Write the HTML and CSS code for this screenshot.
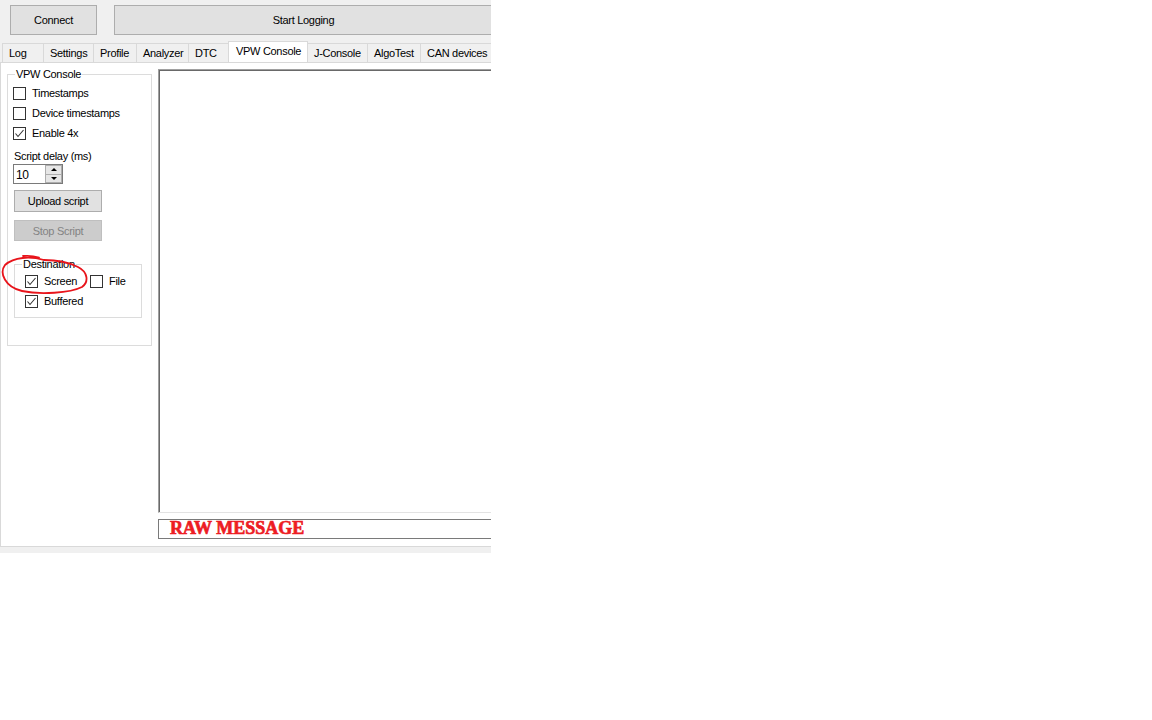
FILE: index.html
```html
<!DOCTYPE html>
<html lang="en">
<head>
  <meta charset="UTF-8" />
  <title>VPW Console</title>
  <link rel="stylesheet" href="styles.css">
</head>
<body>
  <div class="window">
    <div class="toolbar">
      <button class="btn btn-connect">Connect</button>
      <button class="btn btn-logging">Start Logging</button>
    </div>

    <div class="tabs">
      <div class="tab w-log">Log</div>
      <div class="tab w-settings">Settings</div>
      <div class="tab w-profile">Profile</div>
      <div class="tab w-analyzer">Analyzer</div>
      <div class="tab w-dtc">DTC</div>
      <div class="tab tab-active w-vpw">VPW Console</div>
      <div class="tab w-jconsole">J-Console</div>
      <div class="tab w-algo">AlgoTest</div>
      <div class="tab w-can">CAN devices</div>
    </div>

    <div class="page">
      <fieldset class="group group-vpw">
        <legend>VPW Console</legend>
        <label class="check-row">
          <span class="checkbox"></span>Timestamps
        </label>
        <label class="check-row">
          <span class="checkbox"></span>Device timestamps
        </label>
        <label class="check-row">
          <span class="checkbox">
            <svg viewBox="0 0 11 11"><polyline points="1.5,5.5 4,8.5 9.5,2" /></svg>
          </span>Enable 4x
        </label>

        <div class="field-label">Script delay (ms)</div>
        <div class="spinner">
          <span class="spinner-value">10</span>
          <span class="spinner-btns">
            <span class="spin-btn"><span class="arrow-up"></span></span>
            <span class="spin-btn"><span class="arrow-down"></span></span>
          </span>
        </div>

        <button class="btn btn-small btn-upload">Upload script</button>
        <button class="btn btn-small btn-disabled">Stop Script</button>

        <fieldset class="group group-dest">
          <legend>Destination</legend>
          <div class="dest-row">
            <label class="check-row check-screen">
              <span class="checkbox">
                <svg viewBox="0 0 11 11"><polyline points="1.5,5.5 4,8.5 9.5,2" /></svg>
              </span>Screen
            </label>
            <label class="check-row">
              <span class="checkbox"></span>File
            </label>
          </div>
          <label class="check-row">
            <span class="checkbox">
              <svg viewBox="0 0 11 11"><polyline points="1.5,5.5 4,8.5 9.5,2" /></svg>
            </span>Buffered
          </label>
        </fieldset>
      </fieldset>

      <div class="console-col">
        <div class="console"></div>
        <div class="raw">RAW MESSAGE</div>
      </div>
    </div>

    <!-- red marker circle drawn over the screenshot -->
    <svg class="scribble" viewBox="0 0 92 44">
      <path d="M23 2 C28 1.5 34 2 39 3.5 M44 6 C30 2 14 3 5 11 C-1 19 5 33 22 37 C40 41 70 39 82 33 C89 28 88 18 78 13 C68 8 55 6 44 6" />
    </svg>
  </div>
</body>
</html>
```

FILE: styles.css
```css
body {
  margin: 0;
  background: #fff;
  font-family: "Liberation Sans", Arial, sans-serif;
  font-size: 11px;
  letter-spacing: -0.3px;
  color: #000;
}

.window {
  position: relative;
  width: 491px;
  height: 553px;
  overflow: hidden;
  background: #f0f0f0;
}

/* top buttons */
.toolbar {
  display: flex;
  gap: 17px;
  height: 42px;
  box-sizing: border-box;
  padding: 5px 0 0 10px;
}
.btn {
  font-family: inherit;
  font-size: 11px;
  letter-spacing: -0.3px;
  color: #000;
  background: #e1e1e1;
  border: 1px solid #adadad;
  padding: 0;
  margin: 0;
  flex-shrink: 0;
}
.btn-connect { width: 87px; height: 30px; }
.btn-logging { width: 379px; height: 30px; }

/* tab strip */
.tabs {
  display: flex;
  align-items: flex-end;
  height: 20px;
  padding-left: 2px;
}
.tab {
  flex-shrink: 0;
  height: 19px;
  box-sizing: border-box;
  border: 1px solid #d9d9d9;
  border-bottom: none;
  margin-right: -1px;
  padding: 3px 0 0 6px;
  background: #f0f0f0;
  white-space: nowrap;
}
.tab-active {
  height: 21px;
  background: #fff;
  padding-top: 3px;
  padding-left: 7px;
  position: relative;
  z-index: 1;
}
.w-log { width: 42px; }
.w-settings { width: 51px; }
.w-profile { width: 44px; }
.w-analyzer { width: 53px; }
.w-dtc { width: 41px; }
.w-vpw { width: 80px; }
.w-jconsole { width: 61px; }
.w-algo { width: 54px; }
.w-can { width: 80px; }

/* tab page */
.page {
  display: flex;
  align-items: flex-start;
  gap: 6px;
  width: 500px;
  height: 485px;
  box-sizing: border-box;
  background: #fff;
  border: 1px solid #d9d9d9;
  padding-left: 6px;
}

.group {
  margin: 0;
  border: 1px solid #dcdcdc;
  box-sizing: border-box;
}
.group legend {
  padding: 0 1px;
  margin-left: 2px;
  line-height: 12px;
}
.group-vpw {
  width: 145px;
  height: 278px;
  margin-top: 5px;
  padding: 3px 5px 0 5px;
  flex-shrink: 0;
}

.check-row {
  display: flex;
  align-items: center;
  gap: 6px;
  height: 20px;
}
.checkbox {
  display: inline-block;
  width: 13px;
  height: 13px;
  box-sizing: border-box;
  border: 1px solid #333;
  background: #fff;
  flex-shrink: 0;
}
.checkbox svg {
  display: block;
  width: 11px;
  height: 11px;
  fill: none;
  stroke: #333;
  stroke-width: 1.1;
}

.field-label {
  margin-top: 7px;
  line-height: 13px;
  padding-left: 1px;
}

.spinner {
  display: flex;
  justify-content: space-between;
  width: 50px;
  height: 20px;
  box-sizing: border-box;
  border: 1px solid #7a7a7a;
  margin-top: 1px;
  background: #fff;
}
.spinner-value {
  padding: 3px 0 0 2px;
  font-size: 12px;
}
.spinner-btns {
  display: flex;
  flex-direction: column;
  width: 16px;
}
.spin-btn {
  flex: 1;
  display: flex;
  align-items: center;
  justify-content: center;
  background: #e6e6e6;
  border: 1px solid #adadad;
  margin-left: -1px;
}
.spin-btn + .spin-btn { border-top: none; }
.arrow-up, .arrow-down {
  width: 0;
  height: 0;
  border-left: 3px solid transparent;
  border-right: 3px solid transparent;
}
.arrow-up { border-bottom: 3px solid #000; }
.arrow-down { border-top: 3px solid #000; }

.btn-small {
  display: block;
  width: 88px;
  margin-left: 1px;
}
.btn-upload {
  height: 22px;
  margin-top: 6px;
}
.btn-disabled {
  height: 21px;
  margin-top: 8px;
  background: #cccccc;
  border-color: #bfbfbf;
  color: #838383;
}

.group-dest {
  width: 128px;
  height: 60px;
  margin: 17px 0 0 1px;
  padding: 0 0 0 10px;
}
.group-dest legend { margin-left: -3px; }
.dest-row {
  display: flex;
  margin-top: 1px;
}
.check-screen { width: 65px; }

/* console area */
.console-col {
  flex: 1;
  margin-top: 6px;
}
.console {
  height: 444px;
  box-sizing: border-box;
  border-left: 1px solid #a0a0a0;
  border-top: 1px solid #a0a0a0;
  border-bottom: 1px solid #e3e3e3;
  box-shadow: inset 1px 1px 0 #696969;
  background: #fff;
}
.raw {
  height: 20px;
  margin-top: 6px;
  box-sizing: border-box;
  border: 1px solid #7a7a7a;
  padding-left: 11px;
  font-family: "Liberation Serif", "Times New Roman", serif;
  font-weight: bold;
  font-size: 18px;
  line-height: 17px;
  letter-spacing: 0;
  color: #ed1c24;
  -webkit-text-stroke: 0.7px #ed1c24;
}

.scribble {
  position: absolute;
  left: 0;
  top: 254px;
  width: 92px;
  height: 44px;
  overflow: visible;
}
.scribble path {
  fill: none;
  stroke: #e8141b;
  stroke-width: 1.8;
  stroke-linecap: round;
}
```
